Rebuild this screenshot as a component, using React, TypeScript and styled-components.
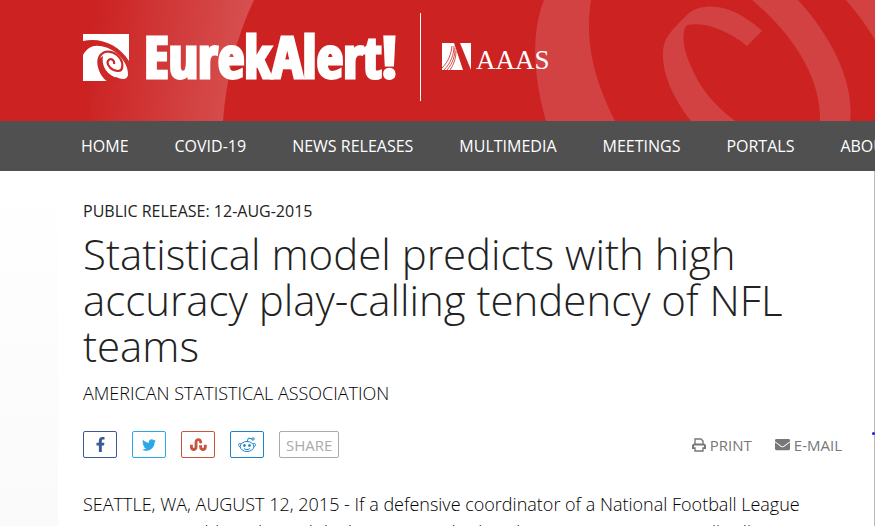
import React from "react";
import styled, { createGlobalStyle } from "styled-components";
import { FaFacebookF, FaTwitter, FaStumbleupon, FaEnvelope } from "react-icons/fa";

const GlobalStyle = createGlobalStyle`
  * { box-sizing: border-box; }
  html { height: 100%; overflow: hidden; }
  body {
    margin: 0;
    height: 100%;
    overflow: hidden;
    background: linear-gradient(#ffffff 170px, #fafafa);
    color: #222222;
    font-family: "Open Sans", "Noto Sans", sans-serif;
  }
`;

const Header = styled.header`
  position: relative;
  display: flex;
  height: 121px;
  padding-left: 83px;
  overflow: hidden;
  background: #cc2222;
`;

const Swirl = styled.svg`
  position: absolute;
  top: 0;
  left: 0;
`;

const Brand = styled.a`
  position: relative;
  display: flex;
  align-items: center;
  gap: 14px;
  width: 337px;
  height: 115px;
  color: #ffffff;
  text-decoration: none;

  svg { flex: none; }
`;

const BrandName = styled.span`
  padding-bottom: 4px;
  font: 700 58px/58px "Noto Sans ExtraCondensed", "Open Sans Condensed", "Roboto Condensed", "Noto Sans Condensed", "Impact", "Liberation Serif", serif;
  -webkit-text-stroke: 3px #ffffff;
`;

const Partner = styled.a`
  position: relative;
  display: flex;
  align-items: center;
  gap: 4px;
  height: 88px;
  margin-top: 13px;
  padding-left: 21px;
  border-left: 1px solid #ffffff;
  color: #ffffff;
  font: 27px/32px "Liberation Serif", serif;
  text-decoration: none;
`;

const PartnerName = styled.span`
  padding-top: 6px;
`;

const Nav = styled.nav`
  display: flex;
  gap: 46px;
  height: 50px;
  padding-left: 81px;
  overflow: hidden;
  background: #505050;
`;

const NavLink = styled.a`
  flex: none;
  color: #ffffff;
  font-size: 16px;
  line-height: 50px;
  text-decoration: none;
`;

const Article = styled.main`
  position: relative;
  margin-left: 58px;
  padding: 28px 32px 0 25px;
  border-right: 1px solid #bbbbbb;
  background: #ffffff;
`;

const Marker = styled.span`
  position: absolute;
  top: 261px;
  right: -1px;
  width: 3px;
  height: 3px;
  border-radius: 2px;
  background: #1a1aee;
`;

const Release = styled.p`
  margin: 0;
  font-size: 16px;
  line-height: 24px;
`;

const Title = styled.h1`
  margin: 8px 0 0;
  font-size: 42px;
  font-weight: 300;
  line-height: 46px;
`;

const Source = styled.p`
  margin: 12px 0 0;
  color: #000000;
  font-size: 18px;
  font-weight: 300;
  line-height: 24px;
`;

const Actions = styled.div`
  display: flex;
  justify-content: space-between;
  align-items: center;
  margin-top: 26px;
`;

const Group = styled.div<{ $gap: number }>`
  display: flex;
  align-items: center;
  gap: ${(p) => p.$gap}px;
`;

const ShareButton = styled.button<{ $color: string }>`
  display: flex;
  align-items: center;
  justify-content: center;
  min-width: 34px;
  height: 27px;
  padding: 0 6px;
  border: 1px solid ${(p) => p.$color};
  border-radius: 2px;
  background: #ffffff;
  color: ${(p) => p.$color};
  font: 15px/24px "Open Sans", sans-serif;
`;

const ToolLink = styled.a`
  display: flex;
  align-items: center;
  gap: 4px;
  color: #777777;
  font-size: 15px;
  line-height: 24px;
  text-decoration: none;
`;

const Body = styled.p`
  margin: 32px 0 0;
  color: #000000;
  font-size: 18px;
  font-weight: 300;
  line-height: 28px;
`;

const navItems = ["HOME", "COVID-19", "NEWS RELEASES", "MULTIMEDIA", "MEETINGS", "PORTALS", "ABOUT"];

function SwirlArt() {
  return (
    <Swirl width="875" height="121" viewBox="0 0 875 121" aria-hidden="true">
      <defs>
        <linearGradient id="fade" gradientUnits="userSpaceOnUse" x1="95" y1="0" x2="245" y2="20">
          <stop offset="0" stopColor="#fff" stopOpacity="0" />
          <stop offset="1" stopColor="#fff" stopOpacity=".2" />
        </linearGradient>
      </defs>
      <path d="M90 0H254C236 37 226 80 223 121H90Z" fill="url(#fade)" />
      <g fill="#fff" fillOpacity=".15">
        <path d="M544 0H591C585 39 592 75 615 121H546C533 74 531 33 544 0Z" />
        <path d="M762 31L747 46C726 29 704 22 687 25C681 32 683 48 690 64C698 85 713 105 735 121H691C673 98 663 75 663 56C663 38 669 33 689 13C707 0 737 7 762 31Z" />
        <path d="M752 0H798C836 42 854 86 850 121H820C821 80 796 37 752 0Z" />
        <path d="M846 0H875V40C867 26 858 14 846 0Z" />
      </g>
    </Swirl>
  );
}

function BrandMark() {
  return (
    <svg width="47" height="47" viewBox="0 0 47 47" aria-hidden="true">
      <path d="M0 0H46V27C36 11 18 3 0 7Z" fill="#fff" />
      <path d="M0 21C4 14 10 11 16 12C31 13 45 27 45 40C45 46 39 46 33 43L27 47H0Z" fill="#fff" />
      <path d="M27 48C17 42 14 30 16 24C19 16 28 16 34 21C42 28 40 37 35 37C29 37 23 31 25 27C27 23 32 26 31 30" fill="none" stroke="#cd2828" strokeWidth="2.2" />
      <path d="M26 47C17 40 15 30 16 25L20 22C18 32 24 42 37 45L34 47Z" fill="#cd2828" />
    </svg>
  );
}

function PartnerMark() {
  return (
    <svg width="30" height="28" viewBox="0 0 30 28" aria-hidden="true">
      <path d="M0 0H12L21 27H0Z" fill="#fff" />
      <path d="M12 3C12 11 9 20 2 27M13 5C13 13 11 20 5 27M14 8C14 15 12 21 8 27M10 3C9 11 7 18 0 25" fill="none" stroke="#cc2222" strokeWidth=".8" />
      <path d="M18 0H29V27Z" fill="#fff" />
    </svg>
  );
}

function RedditIcon() {
  return (
    <svg width="18" height="16" viewBox="0 0 18 16" fill="none" stroke="currentColor" aria-hidden="true">
      <ellipse cx="9" cy="9.5" rx="6.8" ry="5" />
      <path d="M9 4.5L10.5 1L14 2M3 7C0 5 0 9 2 10M15 7C18 5 18 9 16 10M6 11.5C8 13 10 13 12 11.5" />
      <circle cx="15" cy="2" r="1.2" />
      <circle cx="6.5" cy="8.5" r="1" fill="currentColor" />
      <circle cx="11.5" cy="8.5" r="1" fill="currentColor" />
    </svg>
  );
}

function PrintIcon() {
  return (
    <svg width="14" height="14" viewBox="0 0 14 14" fill="none" stroke="currentColor" strokeWidth="1.4" aria-hidden="true">
      <path d="M3 7V1H9L11 3V7" />
      <path d="M1 11V8Q1 6.500 2.500 6.500H11.500Q13 6.500 13 8V11" strokeWidth="2" />
      <path d="M1 10H3V13H11V10H13" />
    </svg>
  );
}

export default function App() {
  return (
    <>
      <GlobalStyle />
      <Header>
        <SwirlArt />
        <Brand href="#"><BrandMark /><BrandName>EurekAlert!</BrandName></Brand>
        <Partner href="#"><PartnerMark /><PartnerName>AAAS</PartnerName></Partner>
      </Header>
      <Nav>{navItems.map((n) => <NavLink href="#" key={n}>{n}</NavLink>)}</Nav>
      <Article>
        <Marker />
        <Release>PUBLIC RELEASE: 12-AUG-2015</Release>
        <Title>Statistical model predicts with high accuracy play-calling tendency of NFL teams</Title>
        <Source>AMERICAN STATISTICAL ASSOCIATION</Source>
        <Actions>
          <Group $gap={15}>
            <ShareButton $color="#3b5998" aria-label="Facebook"><FaFacebookF size={15} /></ShareButton>
            <ShareButton $color="#2ca7e8" aria-label="Twitter"><FaTwitter size={14} /></ShareButton>
            <ShareButton $color="#c7543d" aria-label="StumbleUpon"><FaStumbleupon size={17} /></ShareButton>
            <ShareButton $color="#1b83c9" aria-label="Reddit"><RedditIcon /></ShareButton>
            <ShareButton $color="#aaaaaa">SHARE</ShareButton>
          </Group>
          <Group $gap={23}>
            <ToolLink href="#"><PrintIcon />PRINT</ToolLink>
            <ToolLink href="#"><FaEnvelope size={15} />E-MAIL</ToolLink>
          </Group>
        </Actions>
        <Body>SEATTLE, WA, AUGUST 12, 2015 - If a defensive coordinator of a National Football League (NFL) team could predict with high accuracy whether their team's opponent will call a pass or run play during a game, he would become a rock star in the league.</Body>
      </Article>
    </>
  );
}
